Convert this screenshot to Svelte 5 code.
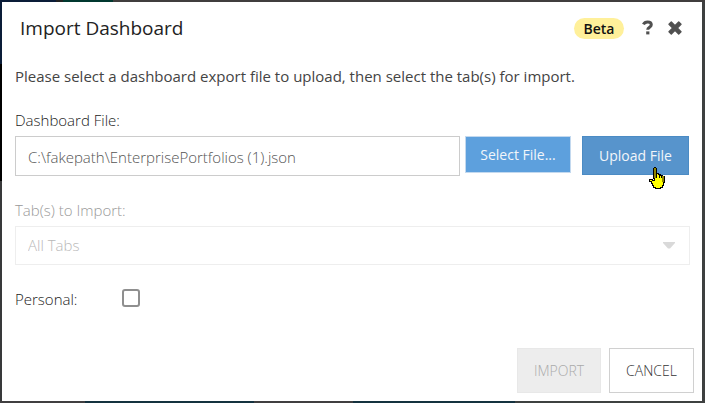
<script>
  let fileName = $state('C:\\fakepath\\EnterprisePortfolios (1).json');
  let personal = $state(false);
</script>

<div class="backdrop">
  <div class="dialog" role="dialog" aria-labelledby="title">
    <header>
      <h1 id="title">Import Dashboard</h1>
      <span class="beta">Beta</span>
      <button class="icon" type="button" aria-label="Help">
        <svg width="12" height="16" viewBox="0 0 12 16" fill="none" stroke="#505050">
          <path d="M1.4 4.4C2.2 2.7 3.7 1.9 5.6 1.9C7.8 1.9 9.3 3.1 9.3 4.8C9.3 7.2 5.7 7.2 5.7 9.8" stroke-width="3" />
          <path d="M4.2 11.4h3.2v3H4.2z" fill="#505050" stroke="none" />
        </svg>
      </button>
      <button class="icon close" type="button" aria-label="Close">
        <svg width="14" height="14" viewBox="0 0 14 14" fill="#505050" stroke="#505050" stroke-width="1.4" stroke-linejoin="round">
          <path d="M3.3 1L7 4.7L10.7 1L13 3.3L9.3 7L13 10.7L10.7 13L7 9.3L3.3 13L1 10.7L4.7 7L1 3.3z" />
        </svg>
      </button>
    </header>

    <form onsubmit={(e) => e.preventDefault()}>
      <p>Please select a dashboard export file to upload, then select the tab(s) for import.</p>

      <label for="file">Dashboard File:</label>
      <div class="file-row">
        <input id="file" type="text" bind:value={fileName} />
        <button class="blue select" type="button">Select File...</button>
        <button class="blue upload" type="button">
          Upload File
          <svg class="cursor" width="17" height="22" viewBox="0 0 17 22" shape-rendering="crispEdges" aria-hidden="true">
            <path d="M6 1h2v5h2v1h2v1h2v1h2v6h-1v3h-1v2h-2v1H7v-1H5v-2H4v-2H3v-2H1v-2h3v1h2z" fill="#ff0" stroke="#000" />
            <path d="M6 1h2v10H6z" fill="#8d8500" />
            <path d="M8.5 6v5M11.5 7v4M13.5 8v3" fill="none" stroke="#000" />
            <path d="M14 9h2v6h-2z" fill="#8d8500" />
            <path d="M5.5 1v11M6 .5h2M8.5 1v5" fill="none" stroke="#000" />
          </svg>
        </button>
      </div>

      <label class="muted" for="tabs">Tab(s) to Import:</label>
      <div class="select-wrap">
        <select id="tabs" disabled>
          <option>All Tabs</option>
        </select>
        <svg class="arrow" width="12" height="7" viewBox="0 0 12 7" aria-hidden="true"><path d="M0 0h12v1L7 6.5H5L0 1z" fill="#d9d9d9" /></svg>
      </div>

      <div class="check-row">
        <label for="personal">Personal:</label>
        <input id="personal" type="checkbox" bind:checked={personal} />
      </div>

      <footer>
        <button class="import" type="submit" disabled>IMPORT</button>
        <button class="cancel" type="button">CANCEL</button>
      </footer>
    </form>
  </div>
</div>

<style>
  .backdrop {
    box-sizing: border-box;
    min-height: 100vh;
    padding: 2px 3px 2px 2px;
    display: flex;
    background:
      linear-gradient(90deg, #0a1c38 8%, #222 8% 9%, #00382f 9% 16%, #403d3d 16%) top / 100% 2px no-repeat,
      linear-gradient(90deg, #403f40 12%, #14323f 12% 36%, #403f40 36% 50%, #14323f 50% 73%, #3e4140 73%) bottom / 100% 2px no-repeat,
      linear-gradient(#0a1c38 16%, #000 16% 45%, #38393a 45%) left / 2px 100% no-repeat,
      #3e4040;
    font-family: "Open Sans", "Noto Sans", sans-serif;
    font-size: 15px;
    font-weight: 300;
    line-height: 20px;
    color: #222;
  }
  .dialog {
    flex: 1;
    display: flex;
    flex-direction: column;
    background: #fff;
  }
  header {
    display: flex;
    align-items: center;
    height: 52px;
    padding: 0 20px 0 18px;
  }
  h1 {
    flex: 1;
    margin: 0;
    font-size: 19px;
    font-weight: 400;
    line-height: 24px;
    color: #222;
  }
  .beta {
    width: 50px;
    border-radius: 12px;
    background: #fff09a;
    color: #111;
    font-size: 14px;
    font-weight: 600;
    line-height: 21px;
    text-align: center;
  }
  button {
    font: inherit;
    font-size: 14px;
    padding: 0;
    border: 0;
    background: none;
    position: relative;
  }
  .icon {
    display: flex;
    margin-left: 18px;
  }
  .close {
    margin-left: 14px;
  }
  form {
    flex: 1;
    display: flex;
    flex-direction: column;
    padding: 12px 8px 8px 13px;
  }
  p {
    margin: 0 0 24px;
    font-weight: 400;
    color: #444;
  }
  label {
    display: block;
    margin-bottom: 6px;
  }
  .file-row {
    display: flex;
    align-items: flex-start;
    margin: 0 5px 24px 0;
  }
  #file {
    box-sizing: border-box;
    flex: 1;
    min-width: 0;
    height: 40px;
    margin-right: 5px;
    padding: 2px 12px 0;
    border: 1px solid #ccc;
    background: #fff;
    font: inherit;
    color: #555;
  }
  .blue {
    width: 106px;
    height: 37px;
    color: #f2f6fa;
    font-weight: 400;
  }
  .select {
    border: 1px solid #c3d9ef;
    background: #5da0dd;
    margin-right: 11px;
  }
  .upload {
    width: 107px;
    height: 39px;
    border: 1px solid #4b8bc4;
    background: #5794cc;
  }
  .cursor {
    position: absolute;
    left: 65px;
    top: 30px;
  }
  .muted {
    color: #999;
  }
  .select-wrap {
    position: relative;
    margin-bottom: 24px;
  }
  #tabs {
    appearance: none;
    display: block;
    width: calc(100% - 4px);
    height: 39px;
    padding: 0 12px 2px;
    border: 1px solid #eee;
    border-radius: 0;
    background: #fff;
    font: inherit;
    color: #b8b8b8;
    opacity: 1;
  }
  .arrow {
    position: absolute;
    right: 19px;
    top: 16px;
  }
  .check-row {
    display: flex;
    align-items: flex-start;
  }
  .check-row label {
    width: 107px;
    margin: 0;
  }
  #personal {
    appearance: none;
    box-sizing: border-box;
    width: 18px;
    height: 18px;
    margin: 0;
    border: 2px solid #8f8f8f;
    border-radius: 3px;
    background: #fff;
  }
  #personal:checked {
    background: #5da0dd;
  }
  footer {
    display: flex;
    justify-content: flex-end;
    gap: 8px;
    margin-top: auto;
  }
  footer button {
    width: 84px;
    height: 45px;
  }
  .import {
    border: 1px solid #e8e8e8;
    background: #ededed;
    color: #aaa;
  }
  .cancel {
    width: 85px;
    border: 1px solid #d0d0d0;
    color: #333;
  }
</style>
